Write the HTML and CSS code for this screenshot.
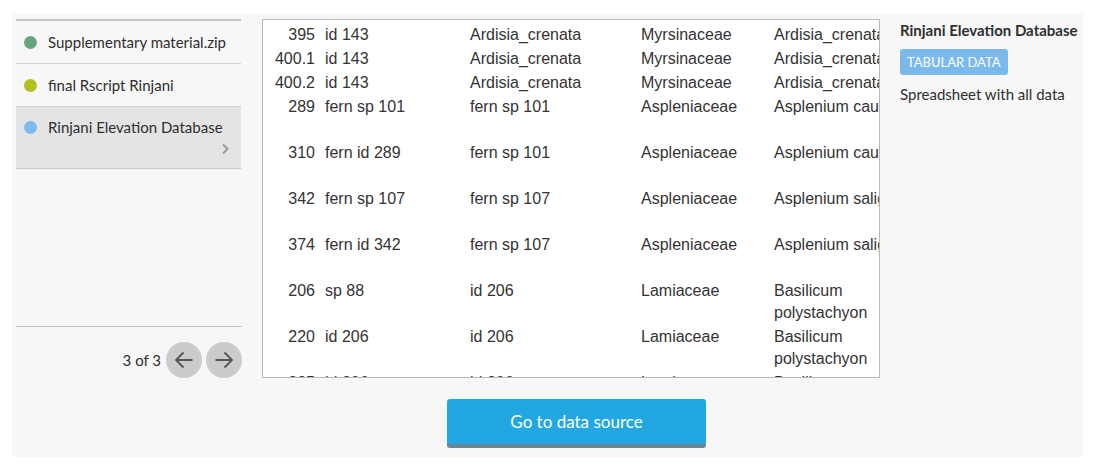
FILE: index.html
```html
<!DOCTYPE html>
<html lang="en">
<head>
<meta charset="utf-8">
<title>Research data</title>
<link rel="stylesheet" href="styles.css">
</head>
<body>
<div class="panel">
  <div class="layout">
    <aside class="sidebar">
      <ul class="files">
        <li class="item"><span class="dot dot-green"></span><span class="name">Supplementary material.zip</span></li>
        <li class="item"><span class="dot dot-olive"></span><span class="name">final Rscript Rinjani</span></li>
        <li class="item active">
          <div class="item-row"><span class="dot dot-blue"></span><span class="name">Rinjani Elevation Database</span></div>
          <div class="chev-row">
            <svg class="chev" width="8" height="12" viewBox="0 0 8 12"><path d="M2 1.5 L6.5 6 L2 10.5" fill="none" stroke="#9a9a9a" stroke-width="2"/></svg>
          </div>
        </li>
      </ul>
      <div class="spacer"></div>
      <div class="pager">
        <span class="count">3 of 3</span>
        <button class="nav" aria-label="Previous">
          <svg width="22" height="22" viewBox="0 0 22 22"><path d="M19.5 11 H3 M10.5 3.5 L3 11 L10.5 18.5" fill="none" stroke="#555" stroke-width="1.8"/></svg>
        </button>
        <button class="nav" aria-label="Next">
          <svg width="22" height="22" viewBox="0 0 22 22"><path d="M2.5 11 H19 M11.5 3.5 L19 11 L11.5 18.5" fill="none" stroke="#555" stroke-width="1.8"/></svg>
        </button>
      </div>
    </aside>

    <div class="center">
      <div class="table-box">
        <table class="data">
          <colgroup>
            <col class="c1"><col class="c2"><col class="c3"><col class="c4"><col class="c5">
          </colgroup>
          <tbody>
            <tr><td class="num">395</td><td>id 143</td><td>Ardisia_crenata</td><td>Myrsinaceae</td><td>Ardisia_crenata</td></tr>
            <tr><td class="num">400.1</td><td>id 143</td><td>Ardisia_crenata</td><td>Myrsinaceae</td><td>Ardisia_crenata</td></tr>
            <tr><td class="num">400.2</td><td>id 143</td><td>Ardisia_crenata</td><td>Myrsinaceae</td><td>Ardisia_crenata</td></tr>
            <tr class="tall"><td class="num">289</td><td>fern sp 101</td><td>fern sp 101</td><td>Aspleniaceae</td><td>Asplenium caudatum</td></tr>
            <tr class="tall"><td class="num">310</td><td>fern id 289</td><td>fern sp 101</td><td>Aspleniaceae</td><td>Asplenium caudatum</td></tr>
            <tr class="tall"><td class="num">342</td><td>fern sp 107</td><td>fern sp 107</td><td>Aspleniaceae</td><td>Asplenium salignum</td></tr>
            <tr class="tall"><td class="num">374</td><td>fern id 342</td><td>fern sp 107</td><td>Aspleniaceae</td><td>Asplenium salignum</td></tr>
            <tr class="tall"><td class="num">206</td><td>sp 88</td><td>id 206</td><td>Lamiaceae</td><td>Basilicum polystachyon</td></tr>
            <tr class="tall"><td class="num">220</td><td>id 206</td><td>id 206</td><td>Lamiaceae</td><td>Basilicum polystachyon</td></tr>
            <tr class="tall"><td class="num">225</td><td>id 206</td><td>id 206</td><td>Lamiaceae</td><td>Basilicum polystachyon</td></tr>
          </tbody>
        </table>
      </div>
      <button class="go">Go to data source</button>
    </div>

    <div class="info">
      <h3 class="title">Rinjani Elevation Database</h3>
      <span class="badge">TABULAR DATA</span>
      <p class="desc">Spreadsheet with all data</p>
    </div>
  </div>
</div>
</body>
</html>
```

FILE: styles.css
```css
* { box-sizing: border-box; }

body {
  margin: 0;
  background: #ffffff;
  font-family: "Lato", "Open Sans", sans-serif;
  color: #2e2e2e;
}

.panel {
  margin: 14px 0 0 12px;
  width: 1071px;
  height: 443px;
  background: #f7f7f7;
  padding: 5px 0 0 4px;
}

.layout {
  display: flex;
  align-items: flex-start;
}

/* Sidebar */
.sidebar {
  width: 225px;
  height: 359px;
  margin-right: 21px;
  display: flex;
  flex-direction: column;
}

.files {
  list-style: none;
  margin: 0;
  padding: 0;
  border-top: 2px solid #c4c4c4;
}

.item {
  display: flex;
  align-items: center;
  padding: 11px 8px;
  line-height: 20px;
  font-size: 15px;
  border-bottom: 1px solid #d2d2d2;
}

.item.active {
  display: block;
  background: #e4e4e4;
  padding: 10px 8px 0 8px;
  height: 62px;
  border-bottom: 1px solid #c8c8c8;
}

.item-row {
  display: flex;
  align-items: center;
}

.chev-row {
  display: flex;
  justify-content: flex-end;
  padding: 6px 4px 0 0;
  height: 16px;
}

.dot {
  width: 13px;
  height: 13px;
  border-radius: 50%;
  margin-right: 11px;
  flex: none;
}
.dot-green { background: #66a57b; }
.dot-olive { background: #b4c11c; }
.dot-blue { background: #7dbbec; }

.spacer { flex: 1; }

.pager {
  border-top: 1px solid #c4c4c4;
  padding-top: 15px;
  display: flex;
  align-items: center;
  justify-content: flex-end;
  gap: 4px;
  margin-right: -1px;
}

.count {
  font-size: 15px;
  margin-right: 1px;
}

.nav {
  width: 36px;
  height: 36px;
  border-radius: 50%;
  border: none;
  background: #cbcbcb;
  padding: 0;
  display: flex;
  align-items: center;
  justify-content: center;
}

/* Center */
.center {
  width: 629px;
  display: flex;
  flex-direction: column;
  align-items: center;
}

.table-box {
  align-self: flex-start;
  width: 618px;
  height: 359px;
  border: 1px solid #b8b8b8;
  background: #ffffff;
  overflow: hidden;
  padding-top: 3px;
}

.data {
  table-layout: fixed;
  width: 666px;
  border-collapse: collapse;
  font-family: "Liberation Sans", Arial, sans-serif;
  font-size: 16px;
  line-height: 22px;
  color: #333333;
}

.c1 { width: 57px; }
.c2 { width: 145px; }
.c3 { width: 171px; }
.c4 { width: 133px; }
.c5 { width: 160px; }

.data td {
  padding: 1px 5px;
  vertical-align: top;
  text-align: left;
}

.data td.num { text-align: right; }

.data tr.tall { height: 46px; }

.go {
  margin-top: 21px;
  width: 259px;
  height: 49px;
  background: #23a7e0;
  border: none;
  border-bottom: 4px solid #6e8594;
  border-radius: 3px;
  color: #ffffff;
  font-family: "Lato", "Open Sans", sans-serif;
  font-size: 17px;
  line-height: 44px;
  padding: 0;
}

/* Info */
.info {
  margin-left: 9px;
  padding-top: 1px;
}

.title {
  margin: 0;
  font-size: 15px;
  line-height: 20px;
  font-weight: 700;
}

.badge {
  display: inline-block;
  margin-top: 9px;
  height: 26px;
  line-height: 26px;
  padding: 0 7px;
  background: #7ab9ea;
  color: #ffffff;
  font-size: 13px;
  border-radius: 3px;
}

.desc {
  margin: 9px 0 0 0;
  font-size: 15px;
  line-height: 20px;
}
```
